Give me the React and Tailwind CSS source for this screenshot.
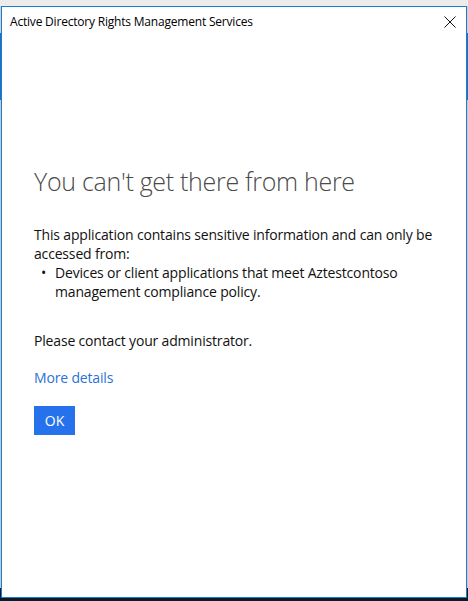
import React from 'react';

const CloseIcon = () => (
  <svg width="12" height="12" viewBox="0 0 12 12" className="block">
    <path d="M0.5 0.5 L11.5 11.5 M11.5 0.5 L0.5 11.5" stroke="#111" strokeWidth="1" fill="none" />
  </svg>
);

// thin strip of desktop visible beside the window
const SideEdge = () => (
  <div className="w-[1px] flex flex-col">
    <div className="h-[27px] bg-[#d0d0d0]" />
    <div className="h-[67px] bg-[#1e6fc0]" />
    <div className="flex-1 bg-[#c8c8c8]" />
    <div className="h-[10px] bg-[#0b1a2a]" />
  </div>
);

const App = () => {
  return (
    <div className="w-[468px] h-[601px] flex flex-col bg-[#e4e4e4] overflow-hidden font-['Open_Sans',sans-serif]">
      {/* desktop strip above the window */}
      <div className="h-[6px] bg-[#ececec] shrink-0" />

      <div className="flex flex-1 min-h-0">
        <SideEdge />
        {/* window */}
        <div className="flex-1 flex flex-col bg-white border border-[#1c7bd2]">
          <div className="h-[30px] flex items-center justify-between pl-[8px] pr-[10px]">
            <span className="text-[12px] text-black tracking-[-0.2px]">Active Directory Rights Management Services</span>
            <CloseIcon />
          </div>

          <div className="pl-[32px] pr-[20px] pt-[126px]">
            <h1 className="text-[25px] font-light text-[#4a4a4a] leading-[36px] tracking-[-0.3px]">
              You can't get there from here
            </h1>

            <div className="mt-[26px] text-[14px] text-[#111] leading-[19px] tracking-[-0.17px]">
              <p>This application contains sensitive information and can only be accessed from:</p>
              <ul>
                <li className="flex">
                  <span className="w-[21px] pl-[7px] shrink-0">•</span>
                  <span>Devices or client applications that meet Aztestcontoso management compliance policy.</span>
                </li>
              </ul>
            </div>

            <p className="mt-[30px] text-[14px] text-[#111] leading-[19px] tracking-[-0.17px]">Please contact your administrator.</p>

            <a className="block mt-[18px] text-[14px] text-[#2a72d6] leading-[19px] tracking-[-0.17px]">More details</a>

            <button className="mt-[19px] w-[41px] h-[29px] bg-[#2672ec] text-white text-[14px] flex items-center justify-center">
              OK
            </button>
          </div>
        </div>
        <SideEdge />
      </div>

      <div className="h-[3px] bg-[#0b1a2a] shrink-0" />
    </div>
  );
};

export default App;
